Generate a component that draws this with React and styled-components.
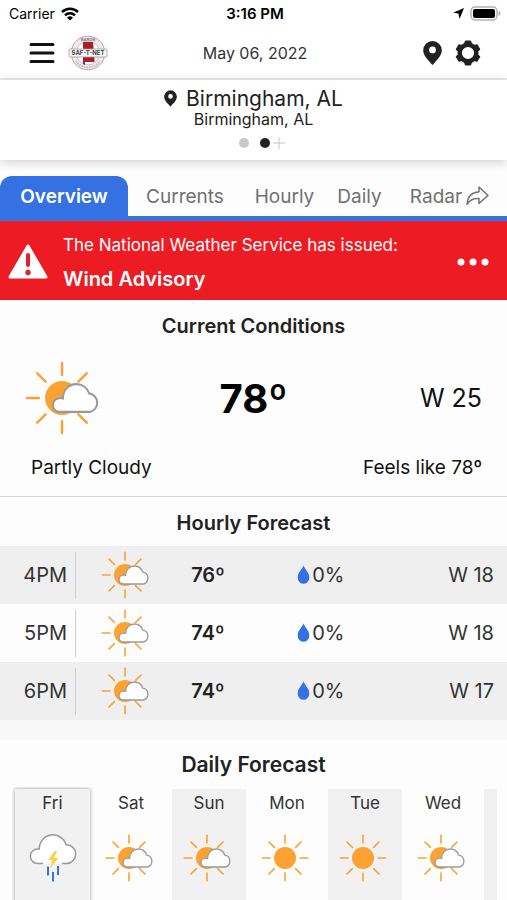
import React from 'react'
import styled, { createGlobalStyle } from 'styled-components'

const hours = [
  { time: '4PM', temp: '76º', rain: '0%', wind: 'W 18' },
  { time: '5PM', temp: '74º', rain: '0%', wind: 'W 18' },
  { time: '6PM', temp: '74º', rain: '0%', wind: 'W 17' },
]

const days = [
  { name: 'Fri', sky: 'storm' },
  { name: 'Sat', sky: 'partly' },
  { name: 'Sun', sky: 'partly' },
  { name: 'Mon', sky: 'sun' },
  { name: 'Tue', sky: 'sun' },
  { name: 'Wed', sky: 'partly' },
]

const rays = [0, 45, 90, 135, 180, 225, 270, 315]

function SkyIcon({ sky, size = 48 }) {
  if (sky === 'storm') {
    return (
      <svg width={size} height={size} viewBox='0 0 48 48' fill='none' aria-hidden='true'>
        <path d='M14.500 29.500h-5.500a7.200 7.200 0 0 1-.3-14.400h1.300a14.200 14.200 0 0 1 27.500-3.400 9.200 9.200 0 1 1-.5 18.300h-5' fill='#fff' />
        <path d='M14 29.500H8.700a7.300 7.300 0 0 1 0-14.600h1.500C10.500 6.500 16.600.8 24 .8c6.300 0 11.500 4 13.200 9.900a9.400 9.400 0 1 1 .3 18.800H33' stroke='#999' strokeWidth='1.500' />
        <path d='M25.500 17l-6.500 9h4l-1.500 8 8-10h-4.500l3-7z' fill='#fbd04b' />
        <path d='M19 32.500v9M24 38v9.500M29 32v9' stroke='#3671e4' strokeWidth='2' />
      </svg>
    )
  }
  return (
    <svg width={size * 13 / 12} height={size} viewBox='0 0 52 48' fill='none' aria-hidden='true'>
      <circle cx='24' cy='24' r='11' fill='#fba233' />
      <g stroke='#fba233' strokeWidth='1.600' strokeLinecap='round'>
        {rays.filter((angle) => sky === 'sun' || angle !== 90).map((angle) => (
          <path key={angle} d='M24 1.300v7.700' transform={`rotate(${angle} 24 24)`} />
        ))}
      </g>
      {sky === 'partly' && (
        <path
          d='M22.500 33a4.400 4.400 0 0 1-.1-8.900c.7-.1 1.500 0 2.200.2 0-5.400 3.800-9.300 8.800-9.300 3.900 0 7.100 2.400 8.300 6.100a6.100 6.100 0 0 1 .7 11.900z'
          fill='#fff'
          stroke='#999'
          strokeWidth='1.300'
        />
      )}
    </svg>
  )
}

function Pin({ width, height }) {
  return (
    <svg width={width} height={height} viewBox='0 0 19 24' aria-hidden='true'>
      <path fill='#212121' fillRule='evenodd' d='M9.500 0A9.300 9.300 0 0 0 .2 9.200C.2 14.500 5 19 9.500 24c4.500-5 9.300-9.500 9.300-14.800A9.300 9.300 0 0 0 9.500 0zm0 5.500a3.400 3.400 0 1 1 0 6.800 3.400 3.400 0 0 1 0-6.800z' />
    </svg>
  )
}

function Gear() {
  return (
    <svg width='26' height='26' viewBox='0 0 26 26' fill='none' aria-hidden='true'>
      <circle cx='13' cy='13' r='8.300' stroke='#212121' strokeWidth='4.400' />
      {[0, 60, 120, 180, 240, 300].map((angle) => (
        <path key={angle} d='M10.300 1h5.400l1 4h-7.400z' fill='#212121' stroke='#212121' strokeLinejoin='round' transform={`rotate(${angle} 13 13)`} />
      ))}
    </svg>
  )
}

function Logo() {
  return (
    <svg width='40' height='36' viewBox='0 0 40 36' role='img' aria-label='SAF-T-NET'>
      <circle cx='20' cy='18' r='16.800' fill='#ededef' stroke='#d9939b' />
      <circle cx='20' cy='18' r='11.800' fill='#fff' stroke='#b9b9bd' strokeWidth='.8' />
      <path d='M15 7h10l1.500 16v4H17v3l-2-1z' fill='#a91f27' />
      <rect x='1' y='14' width='38' height='8' rx='1' fill='#f6f6f6' stroke='#a0a0a4' strokeWidth='.8' />
      <text x='20' y='20' textAnchor='middle' fontSize='6' fontWeight='700' fill='#444'>SAF-T-NET</text>
      <text x='20' y='6' textAnchor='middle' fontSize='4' fontWeight='700' fill='#77777b'>BARON</text>
      <path d='M8 26a14.300 14.300 0 0 0 24 0' fill='none' stroke='#bcbcc0' strokeWidth='2' strokeDasharray='1.500 1' />
    </svg>
  )
}

export default function App() {
  return (
    <Page>
      <GlobalStyle />
      <StatusBar>
        <Side>
          Carrier
          <svg width='18' height='14' viewBox='0 0 18 14' fill='none' stroke='#000' strokeWidth='2.500' aria-label='Wi-Fi'>
            <path d='M1 5a11.500 11.500 0 0 1 16 0M4 8.300a7.200 7.200 0 0 1 10 0' />
            <path d='M9 13.500L6 10.700a4.300 4.300 0 0 1 6 0z' fill='#000' stroke='none' />
          </svg>
        </Side>
        <Clock>3:16 PM</Clock>
        <Side $end>
          <svg width='11' height='11' viewBox='0 0 11 11' aria-hidden='true'>
            <path d='M11 0L6.500 11 5.500 5.500 0 4.700z' />
          </svg>
          <svg width='31' height='15' viewBox='0 0 31 15' aria-label='Battery'>
            <rect x='1' y='1' width='26' height='13' rx='4' fill='#fff' stroke='#b3b3b3' strokeWidth='1.500' />
            <rect x='3' y='3' width='22' height='9' rx='2' />
            <path d='M28.500 5v5q2-.6 2-2.500t-2-2.500z' fill='#b3b3b3' />
          </svg>
        </Side>
      </StatusBar>

      <Header>
        <HeaderSide>
          <IconButton aria-label='Menu'>
            <svg width='26' height='22' viewBox='0 0 26 22' stroke='#111' strokeWidth='3' strokeLinecap='round' aria-hidden='true'>
              <path d='M2 2.500h22M2 11h22M2 19.500h22' />
            </svg>
          </IconButton>
          <Logo />
        </HeaderSide>
        <DateText>May 06, 2022</DateText>
        <HeaderSide $end>
          <IconButton aria-label='Locations'><Pin width={19} height={24} /></IconButton>
          <IconButton aria-label='Settings'><Gear /></IconButton>
        </HeaderSide>
      </Header>

      <Location>
        <City><Pin width={13} height={17} />Birmingham, AL</City>
        <SubCity>Birmingham, AL</SubCity>
        <Pager>
          <Dot aria-label='Location 1' />
          <Dot $active aria-label='Location 2' />
          <AddButton aria-label='Add location'>
            <svg width='12' height='12' viewBox='0 0 12 12' stroke='#c8c8c8' aria-hidden='true'>
              <path d='M6 0v12M0 6h12' />
            </svg>
          </AddButton>
        </Pager>
      </Location>

      <Tabs>
        <Tab $active aria-current='page'>Overview</Tab>
        <Tab>Currents</Tab>
        <Tab>Hourly</Tab>
        <Tab>Daily</Tab>
        <Tab>
          Radar
          <svg width='23' height='20' viewBox='0 0 23 20' fill='none' stroke='#6f6f6f' strokeWidth='1.400' strokeLinejoin='round' aria-hidden='true'>
            <path d='M13 1l9 8.500-9 8v-5C7 12 3.500 14 1 18.500 1.500 11 5.500 6.300 13 5.800z' />
          </svg>
        </Tab>
      </Tabs>

      <Alert>
        <svg width='40' height='35' viewBox='0 0 40 35' aria-hidden='true'>
          <path d='M20 2L38 33H2z' fill='#fff' stroke='#fff' strokeWidth='3' strokeLinejoin='round' />
          <path d='M20 11v10' stroke='#ed1c24' strokeWidth='4' strokeLinecap='round' />
          <circle cx='20' cy='28.500' r='2.700' fill='#ed1c24' />
        </svg>
        <AlertText>
          <p>The National Weather Service has issued:</p>
          <strong>Wind Advisory</strong>
        </AlertText>
        <IconButton aria-label='More alerts'>
          <svg width='32' height='8' viewBox='0 0 32 8' fill='#fff' aria-hidden='true'>
            <circle cx='4' cy='4' r='3.500' />
            <circle cx='16' cy='4' r='3.500' />
            <circle cx='28' cy='4' r='3.500' />
          </svg>
        </IconButton>
      </Alert>

      <Current>
        <Title>Current Conditions</Title>
        <Reading>
          <SkyIcon sky='partly' size={74} />
          <Temperature>78º</Temperature>
          <Wind>W 25</Wind>
        </Reading>
        <Summary>
          <span>Partly Cloudy</span>
          <span>Feels like 78º</span>
        </Summary>
      </Current>

      <Hourly>
        <Title>Hourly Forecast</Title>
        <HourTable>
          <tbody>
            {hours.map((hour) => (
              <tr key={hour.time}>
                <th scope='row'><Time>{hour.time}</Time></th>
                <td className='sky'><SkyIcon sky='partly' /></td>
                <td className='temp'>{hour.temp}</td>
                <td className='rain'>
                  <Rain>
                    <svg width='13' height='20' viewBox='0 0 13 20' aria-hidden='true'>
                      <path d='M6.500.5C5 4.500.7 7.500.7 12.500a5.800 6.300 0 0 0 11.600 0C12.300 7.500 8 4.500 6.500.5z' fill='#3671e4' />
                    </svg>
                    {hour.rain}
                  </Rain>
                </td>
                <td className='wind'>{hour.wind}</td>
              </tr>
            ))}
          </tbody>
        </HourTable>
      </Hourly>

      <Daily>
        <DailyTitle>Daily Forecast</DailyTitle>
        <DayStrip>
          {days.map((day, index) => (
            <Day key={day.name} $shaded={index % 2 === 0} $active={index === 0}>
              {day.name}
              <SkyIcon sky={day.sky} />
            </Day>
          ))}
          <NextDay />
        </DayStrip>
      </Daily>
    </Page>
  )
}

const GlobalStyle = createGlobalStyle`
  * {
    box-sizing: border-box;
  }
  body {
    margin: 0;
    background: #fdfdfd;
    color: #222;
    font-family: Inter, "Liberation Sans", sans-serif;
  }
  h1, h2, p {
    margin: 0;
  }
  button {
    border: 0;
    padding: 0;
    background: none;
    color: inherit;
    font: inherit;
    cursor: pointer;
  }
  svg {
    flex: none;
    display: block;
  }
`;

const Page = styled.div`
  display: flex;
  flex-direction: column;
  height: 100vh;
  overflow: hidden;
  > * {
    flex: none;
  }
`;

const StatusBar = styled.div`
  display: grid;
  grid-template-columns: 1fr auto 1fr;
  align-items: center;
  height: 27px;
  padding: 0 6px 0 9px;
  background: #fff;
  color: #000;
  font-size: 14px;
`;

const Side = styled.div`
  display: flex;
  align-items: center;
  justify-content: ${({ $end }) => ($end ? 'flex-end' : 'flex-start')};
  gap: 6px;
`;

const Clock = styled.span`
  font-size: 15px;
  font-weight: 600;
`;

const Header = styled.header`
  display: grid;
  grid-template-columns: 1fr auto 1fr;
  align-items: center;
  height: 53px;
  padding: 0 26px 0 29px;
  border-bottom: 2px solid #ececec;
  background: #fff;
`;

const HeaderSide = styled(Side)`
  gap: 13px;
`;

const IconButton = styled.button`
  display: flex;
  align-items: center;
`;

const DateText = styled.span`
  font-size: 16px;
  color: #333;
`;

const Location = styled.section`
  display: flex;
  flex-direction: column;
  align-items: center;
  height: 80px;
  padding-top: 6px;
  margin-bottom: 16px;
  background: #fff;
  box-shadow: 0 2px 10px rgba(0, 0, 0, 0.18);
`;

const City = styled.h1`
  display: flex;
  align-items: center;
  gap: 9px;
  font-size: 21px;
  line-height: 25px;
  font-weight: 400;
`;

const SubCity = styled.p`
  font-size: 16px;
  line-height: 16px;
`;

const Pager = styled.div`
  display: flex;
  align-items: center;
  gap: 11px;
  height: 32px;
  padding-left: 16px;
`;

const Dot = styled.button`
  width: 10px;
  height: 10px;
  border-radius: 50%;
  background: ${({ $active }) => ($active ? '#222' : '#c8c8c8')};
`;

const AddButton = styled.button`
  margin-left: -8px;
`;

const Tabs = styled.nav`
  display: grid;
  grid-template-columns: 128fr 114fr 85fr 65fr 115fr;
  height: 45px;
  border-bottom: 5px solid #3671e4;
`;

const Tab = styled.button`
  display: flex;
  align-items: center;
  justify-content: center;
  gap: 4px;
  border-radius: 12px 12px 0 0;
  font-size: 19px;
  white-space: nowrap;
  color: ${({ $active }) => ($active ? '#fff' : '#707070')};
  background: ${({ $active }) => ($active ? '#3671e4' : 'transparent')};
  font-weight: ${({ $active }) => ($active ? 600 : 400)};
`;

const Alert = styled.section`
  display: flex;
  align-items: center;
  gap: 15px;
  height: 79px;
  padding: 2px 18px 0 8px;
  background: #ed1c24;
  color: #fff;
`;

const AlertText = styled.div`
  flex: 1;
  font-size: 17px;
  line-height: 32px;
  padding-top: 3px;
  strong {
    display: block;
    font-size: 20px;
    line-height: 37px;
    font-weight: 600;
  }
`;

const Title = styled.h2`
  font-size: 20px;
  line-height: 24px;
  font-weight: 600;
  text-align: center;
  color: #222;
`;

const Current = styled.section`
  height: 197px;
  padding: 14px 25px 0;
  border-bottom: 1px solid #d4d4d4;
  color: #111;
`;

const Reading = styled.div`
  display: grid;
  grid-template-columns: 1fr auto 1fr;
  align-items: center;
  margin-top: 23px;
`;

const Temperature = styled.span`
  font-size: 40px;
  font-weight: 700;
  color: #000;
`;

const Wind = styled.span`
  font-size: 25px;
  text-align: right;
`;

const Summary = styled.div`
  display: flex;
  justify-content: space-between;
  padding: 0 0 0 6px;
  margin-top: 20px;
  font-size: 19px;
  line-height: 26px;
`;

const Hourly = styled.section`
  padding-top: 14px;
  border-bottom: 20px solid #f8f8f8;
`;

const HourTable = styled.table`
  width: 100%;
  margin-top: 11px;
  table-layout: fixed;
  border-collapse: collapse;
  font-size: 20px;
  color: #333;
  tr {
    height: 58px;
  }
  tr:nth-child(odd) {
    background: #efefef;
  }
  th, td {
    padding: 0;
  }
  th {
    width: 15%;
    font-weight: 400;
  }
  .sky {
    width: 20%;
    svg {
      margin: 0 auto;
    }
  }
  .temp {
    width: 12%;
    text-align: center;
    font-weight: 600;
    color: #222;
  }
  .rain {
    width: 32%;
  }
  .wind {
    padding-right: 13px;
    text-align: right;
  }
`;

const Time = styled.div`
  height: 47px;
  padding-right: 8px;
  border-right: 1px solid #d0d0d0;
  line-height: 47px;
  text-align: right;
`;

const Rain = styled.div`
  display: flex;
  align-items: center;
  justify-content: center;
  gap: 2px;
  padding-left: 3px;
`;

const Daily = styled.section`
  padding-top: 13px;
`;

const DailyTitle = styled(Title)`
  font-size: 21px;
`;

const DayStrip = styled.div`
  display: flex;
  gap: 4px;
  margin: 10px 10px 0 12px;
  padding: 2px 0 0 3px;
  overflow: hidden;
`;

const Day = styled.button`
  display: flex;
  flex: 0 0 ${({ $active }) => ($active ? '75px' : '74px')};
  flex-direction: column;
  align-items: center;
  gap: 20px;
  height: 160px;
  padding-top: 3px;
  font-size: 17px;
  line-height: 22px;
  color: #333;
  background: ${({ $shaded }) => ($shaded ? '#f1f1f1' : 'transparent')};
  box-shadow: ${({ $active }) => ($active ? '0 0 4px rgba(0, 0, 0, 0.4)' : 'none')};
`;

const NextDay = styled.div`
  flex: 1;
  background: #f1f1f1;
`;
